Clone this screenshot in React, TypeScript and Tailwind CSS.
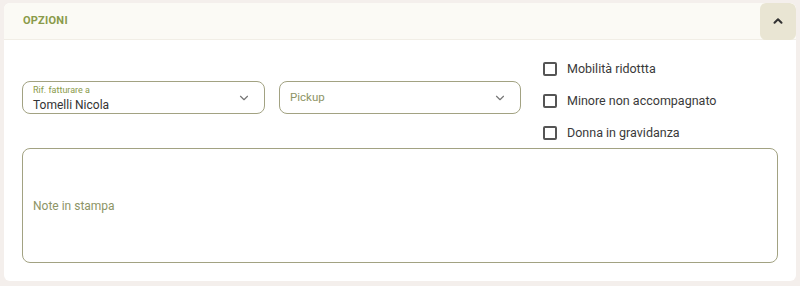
import { ChevronDown } from "lucide-react";

function Chevron({ up }: { up?: boolean }) {
  return (
    <svg width="14" height="14" viewBox="0 0 24 24" fill="none" stroke="currentColor" strokeWidth={up ? 3.5 : 2.5} strokeLinecap="round" strokeLinejoin="round">
      {up ? <path d="M6 15l6-6 6 6" /> : <path d="M6 9l6 6 6-6" />}
    </svg>
  );
}

function Check({ label }: { label: string }) {
  return (
    <label className="h-[32px] flex items-center gap-[10px]">
      <span className="w-[14px] h-[14px] border-2 border-[#555] rounded-[2px] bg-white" />
      <span className="text-[12.5px] text-[#3a3a3a]">{label}</span>
    </label>
  );
}

export default function App() {
  return (
    <div className="w-[800px] h-[286px] bg-[#f4efec] pt-[3px] px-[4px] font-['Roboto',sans-serif]">
      <div className="bg-white rounded-md h-[278px] overflow-hidden">
        <div className="h-[37px] bg-[#fbfaf5] flex items-center justify-between pl-[19px] border-b border-[#f1eee6]">
          <span className="text-[11px] font-bold text-[#8a9a4a] tracking-wide">OPZIONI</span>
          <button className="w-[36px] h-[37px] bg-[#e9e5d3] rounded-md flex items-center justify-center text-[#333]">
            <Chevron up />
          </button>
        </div>
        <div className="px-[18px] pt-[13px]">
          <div className="flex">
            <div className="flex gap-[14px] mt-[28px]">
              <div className="w-[243px] h-[33px] border border-[#a2a282] rounded-lg pl-[10px] pr-[13px] flex items-center justify-between">
                <div className="flex flex-col leading-none pt-[2px]">
                  <span className="text-[9px] text-[#8a9a4a]">Rif. fatturare a</span>
                  <span className="text-[12px] text-[#333] mt-[4px]">Tomelli Nicola</span>
                </div>
                <ChevronDown size={14} className="text-[#777]" strokeWidth={2} />
              </div>
              <div className="w-[242px] h-[33px] border border-[#a2a282] rounded-lg pl-[10px] pr-[13px] flex items-center justify-between">
                <span className="text-[11.5px] text-[#8d9466]">Pickup</span>
                <ChevronDown size={14} className="text-[#777]" strokeWidth={2} />
              </div>
            </div>
            <div className="ml-[22px] flex flex-col">
              <Check label="Mobilità ridottta" />
              <Check label="Minore non accompagnato" />
              <Check label="Donna in gravidanza" />
            </div>
          </div>
          <div className="w-[756px] h-[115px] -mt-[1px] border border-[#a2a282] rounded-lg px-[10px] flex items-center">
            <span className="text-[12px] text-[#8d9466]">Note in stampa</span>
          </div>
        </div>
      </div>
    </div>
  );
}
